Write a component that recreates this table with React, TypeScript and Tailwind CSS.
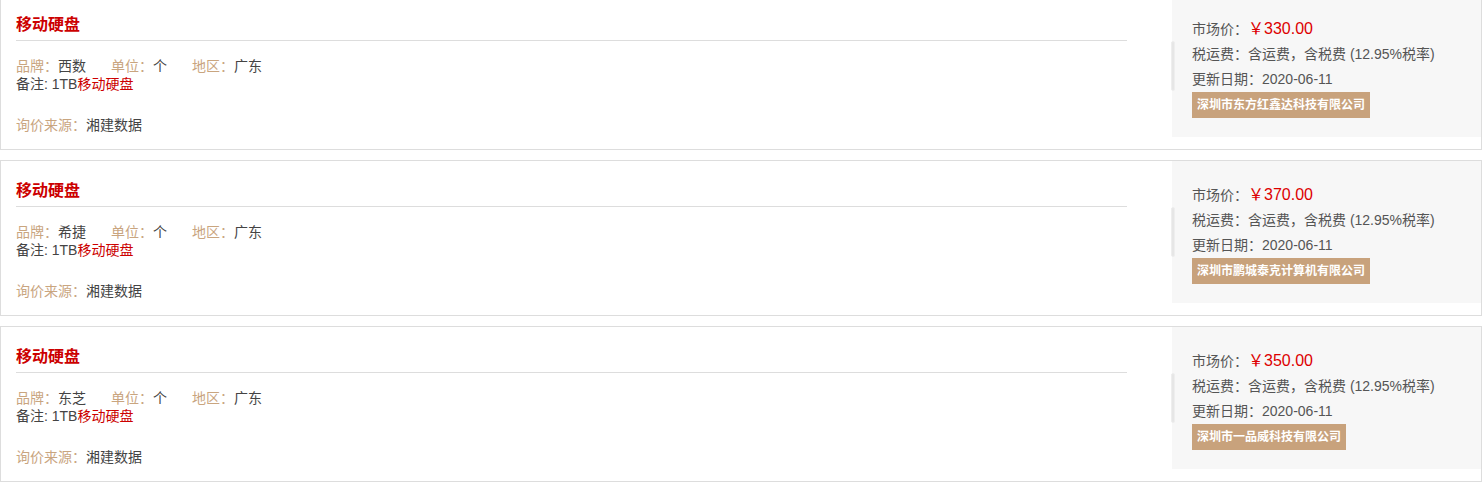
import React from "react";

type Item = { brand: string; price: string; company: string };

const items: Item[] = [
  { brand: "西数", price: "330.00", company: "深圳市东方红鑫达科技有限公司" },
  { brand: "希捷", price: "370.00", company: "深圳市鹏城泰克计算机有限公司" },
  { brand: "东芝", price: "350.00", company: "深圳市一品威科技有限公司" },
];

function Card({ item }: { item: Item }) {
  return (
    <div className="flex h-[156px] border border-[#dddddd] bg-white">
      <div className="flex-1 pl-[15px] pr-[45px]">
        <div className="pt-[18px] pb-[3px] border-b border-[#dddddd] text-[16px] leading-[24px] font-bold text-[#cc0000]">
          移动硬盘
        </div>
        <div className="mt-[16px] text-[14px] leading-[18px] text-[#444444]">
          <div className="flex">
            <span className="mr-[25px]">
              <span className="text-[#c9a57f]">品牌：</span>
              {item.brand}
            </span>
            <span className="mr-[25px]">
              <span className="text-[#c9a57f]">单位：</span>个
            </span>
            <span>
              <span className="text-[#c9a57f]">地区：</span>广东
            </span>
          </div>
          <div>
            备注: 1TB<span className="text-[#cc0000]">移动硬盘</span>
          </div>
          <div className="mt-[23px]">
            <span className="text-[#c9a57f]">询价来源：</span>湘建数据
          </div>
        </div>
      </div>
      <div className="relative w-[309px] h-[142px] bg-[#f7f7f7] pl-[20px] pt-[21px] text-[14px] leading-[25px] text-[#555555]">
        <div className="absolute -left-px top-[46px] h-[50px] w-[4px] rounded-[2px] bg-[#e6e6e6] border border-[#eeeeee]" />
        <div>
          市场价：<span className="text-[16px] text-[#dd0000]">￥{item.price}</span>
        </div>
        <div>税运费：含运费，含税费 (12.95%税率)</div>
        <div>更新日期：2020-06-11</div>
        <div className="inline-block h-[26px] bg-[#c8a27c] px-[5px] text-[12px] leading-[26px] font-bold text-white">
          {item.company}
        </div>
      </div>
    </div>
  );
}

export default function App() {
  return (
    <div
      className="-mt-[6px] flex flex-col gap-[10px] bg-white"
      style={{ fontFamily: '"Liberation Sans", "Noto Sans CJK SC", sans-serif' }}
    >
      {items.map((it, i) => (
        <Card key={i} item={it} />
      ))}
    </div>
  );
}
